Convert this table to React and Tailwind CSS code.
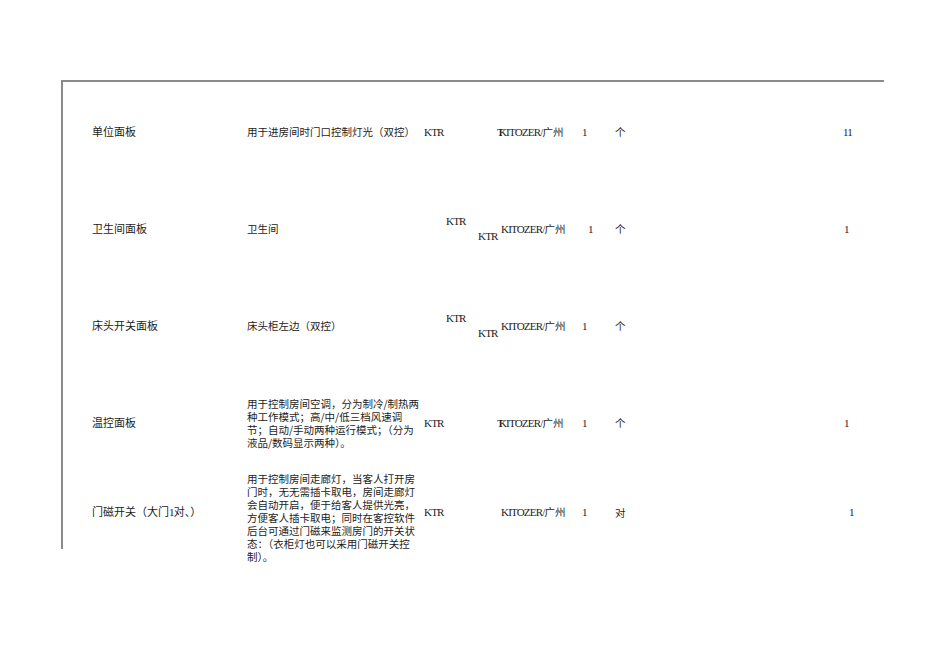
import React from "react";

const FONT = { fontFamily: '"Noto Sans CJK SC", "Liberation Serif", sans-serif' };
const LATIN = { fontFamily: '"Liberation Serif", "Noto Sans CJK SC", serif' };

// Latin runs in the reference are narrow serif (SimSun half-width)
const Lat = ({ children, className = "" }) => (
  <span className={"text-[11px] tracking-[-0.8px] " + className} style={LATIN}>
    {children}
  </span>
);

const rows = [
  {
    name: "单位面板",
    desc: ["用于进房间时门口控制灯光（双控）"],
    ktr: "single",
    makerT: true,
    qtyPad: "",
    unit: "个",
    last: "11",
    lastPad: "",
    h: "h-[97px] grid-rows-[97px]",
    descPad: "",
  },
  {
    name: "卫生间面板",
    desc: ["卫生间"],
    ktr: "double",
    makerT: false,
    qtyPad: "pl-[6px]",
    unit: "个",
    last: "1",
    lastPad: "pl-[1px]",
    h: "h-[97px] grid-rows-[97px]",
    descPad: "",
  },
  {
    name: "床头开关面板",
    desc: ["床头柜左边（双控）"],
    ktr: "double",
    makerT: false,
    qtyPad: "",
    unit: "个",
    last: "",
    lastPad: "",
    h: "h-[97px] grid-rows-[97px]",
    descPad: "",
  },
  {
    name: "温控面板",
    desc: [
      "用于控制房间空调，分为制冷/制热两",
      "种工作模式；高/中/低三档风速调",
      "节；自动/手动两种运行模式；（分为",
      "液品/数码显示两种）。",
    ],
    ktr: "single",
    makerT: true,
    qtyPad: "",
    unit: "个",
    last: "1",
    lastPad: "pl-[1px]",
    h: "h-[97px] grid-rows-[97px]",
    descPad: "",
  },
  {
    name: "门磁开关（大门1对、）",
    desc: [
      "用于控制房间走廊灯，当客人打开房",
      "门时，无无需插卡取电，房间走廊灯",
      "会自动开启，便于给客人提供光亮，",
      "方便客人插卡取电；同时在客控软件",
      "后台可通过门磁来监测房门的开关状",
      "态：（衣柜灯也可以采用门磁开关控",
      "制）。",
    ],
    ktr: "single",
    makerT: false,
    qtyPad: "",
    unit: "对",
    last: "1",
    lastPad: "pl-[6px]",
    h: "h-[82px] grid-rows-[82px]",
    descPad: "pt-[10px]",
  },
];

const Row = ({ r }) => (
  <div
    className={
      "grid grid-cols-[184px_177px_77px_81px_33px_228px_1fr] items-center " + r.h
    }
  >
    {/* name */}
    <div className="pl-[29px] text-[11px] leading-[13px] whitespace-nowrap">
      {r.name.includes("1") ? (
        <>
          门磁开关（大门<Lat>1</Lat>对、）
        </>
      ) : (
        r.name
      )}
    </div>

    {/* description */}
    <div className={"text-[10.5px] leading-[13px] whitespace-nowrap " + r.descPad}>
      {r.desc.map((l, i) => (
        <div key={i}>{l}</div>
      ))}
    </div>

    {/* brand */}
    {r.ktr === "double" ? (
      <div className="flex flex-col gap-[4px] text-[11px] leading-[11px]">
        <Lat className="pl-[22px]">KTR</Lat>
        <Lat className="pl-[54px]">KTR</Lat>
      </div>
    ) : (
      <div className="text-[11px] leading-[13px]">
        <Lat>KTR</Lat>
      </div>
    )}

    {/* maker */}
    <div className="leading-[13px] whitespace-nowrap text-[10.5px]">
      {r.makerT && <Lat className="-ml-[4px] mr-[-4px]">T</Lat>}
      <Lat>KITOZER/</Lat>广州
    </div>

    {/* qty */}
    <div className={"text-[11px] leading-[13px] " + r.qtyPad}>
      <Lat>1</Lat>
    </div>

    {/* unit */}
    <div className="text-[10.5px] leading-[13px]">{r.unit}</div>

    {/* amount */}
    <div className={"text-[11px] leading-[13px] " + r.lastPad}>
      <Lat>{r.last}</Lat>
    </div>
  </div>
);

export default function App() {
  return (
    <div className="w-[950px] h-[672px] bg-white text-[#1c1c1c]" style={FONT}>
      <div className="pt-[80px] pl-[61px]">
        <div className="w-[823px] h-[469px] border-t-2 border-l-2 border-[#8a8a8a]">
          <div className="pt-[1px]">
            {rows.map((r, i) => (
              <Row key={i} r={r} />
            ))}
          </div>
        </div>
      </div>
    </div>
  );
}
